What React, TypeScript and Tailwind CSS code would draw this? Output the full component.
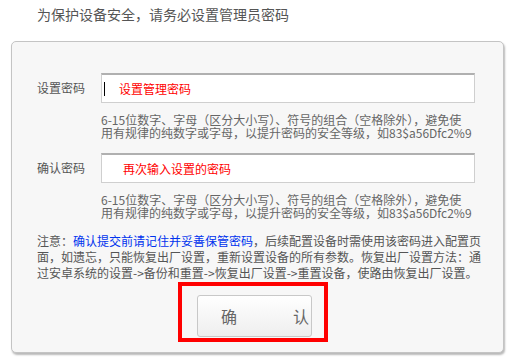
import React from 'react';

const font = { fontFamily: '"Noto Sans CJK SC", "Liberation Sans", sans-serif' };

const Hint = () => (
  <p className="ml-[64px] mt-[10px] w-[390px] text-[12px] leading-[13px] text-[#666]">
    6-15位数字、字母（区分大小写）、符号的组合（空格除外），避免使
    <br />
    用有规律的纯数字或字母，以提升密码的安全等级，如83$a56Dfc2%9
  </p>
);

const App: React.FC = () => {
  return (
    <div className="relative w-[513px] h-[360px] overflow-hidden bg-white" style={font}>
      {/* 顶部提示 */}
      <div className="pt-[6px] pl-[37px] text-[14px] leading-[16px] text-[#555]">
        为保护设备安全，请务必设置管理员密码
      </div>

      {/* 表单面板 */}
      <div className="ml-[11px] mt-[19px] w-[493px] h-[312px] rounded-[5px] border border-[#c4c4c4] bg-[#f7f7f7] pl-[25px] pt-[31px] shadow-[1px_2px_2px_rgba(0,0,0,0.28)]">
        <div className="flex items-center">
          <label className="w-[64px] text-[12px] text-[#555]">设置密码</label>
          <div className="flex h-[30px] w-[374px] items-center border border-t-2 border-[#cfcfcf] border-t-[#b0b0b0] bg-white">
            <span className="ml-[2px] h-[14px] w-px bg-black" />
            <span className="ml-[14px] text-[12px] text-[#f00]">设置管理密码</span>
          </div>
        </div>
        <Hint />

        <div className="mt-[14px] flex items-center">
          <label className="w-[64px] text-[12px] text-[#555]">确认密码</label>
          <div className="flex h-[30px] w-[374px] items-center border border-t-2 border-[#cfcfcf] border-t-[#b0b0b0] bg-white pl-[21px]">
            <span className="text-[12px] text-[#f00]">再次输入设置的密码</span>
          </div>
        </div>
        <Hint />

        <p className="mt-[14px] w-[446px] text-[12px] leading-[16px] text-[#555]">
          注意：<span className="text-[#0033ee]">确认提交前请记住并妥善保管密码</span>，后续配置设备时需使用该密码进入配置页面，如遗忘，只能恢复出厂设置，重新设置设备的所有参数。恢复出厂设置方法：通过安卓系统的设置-&gt;备份和重置-&gt;恢复出厂设置-&gt;重置设备，使路由恢复出厂设置。
        </p>

        <button className="ml-[160px] mt-[14px] flex h-[42px] w-[115px] items-center rounded-[3px] border border-[#c8c8c8] bg-gradient-to-b from-white to-[#eeeeee] pl-[23px] text-[16px] text-[#666]">
          <span>确</span>
          <span className="ml-[56px]">认</span>
        </button>
      </div>

      {/* 红色标注框 */}
      <div className="absolute left-[178px] top-[282px] h-[60px] w-[150px] border-[4px] border-[#ff0000]" />
    </div>
  );
};

export default App;
